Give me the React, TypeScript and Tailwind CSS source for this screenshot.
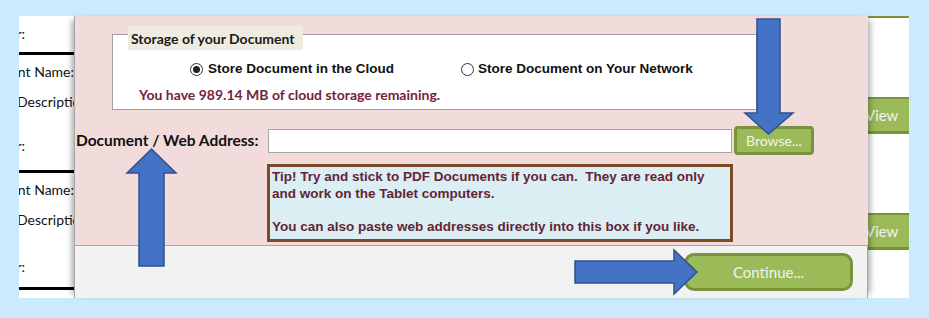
import React from "react";

const calibri = { fontFamily: "Lato, 'Open Sans', sans-serif" };
const arial = { fontFamily: "'Liberation Sans', Arial, sans-serif" };

const Radio = ({ checked }: { checked?: boolean }) => (
  <span className="flex items-center justify-center w-[13px] h-[13px] rounded-full border border-[#333] bg-white shrink-0">
    {checked && <span className="w-[7px] h-[7px] rounded-full bg-[#222]" />}
  </span>
);

const LeftStrip = () => (
  <div className="w-[55px] h-full bg-white overflow-hidden text-[14px] text-[#111] flex flex-col" style={calibri}>
    <div className="h-[36px] flex items-center pb-[2px]">
      <div className="w-[6px] flex justify-end whitespace-nowrap">Owner:</div>
    </div>
    <div className="h-[3px] bg-black" />
    <div className="h-[32px] flex items-center">
      <div className="w-[55px] flex justify-end whitespace-nowrap">Document Name:</div>
    </div>
    <div className="h-[28px] flex items-center whitespace-nowrap">
      <span className="ml-[-2px]">Description:</span>
    </div>
    <div className="h-[55px] flex items-end pb-[14px]">
      <div className="w-[6px] flex justify-end whitespace-nowrap">Owner:</div>
    </div>
    <div className="h-[3px] bg-black" />
    <div className="h-[32px] flex items-center">
      <div className="w-[55px] flex justify-end whitespace-nowrap">Document Name:</div>
    </div>
    <div className="h-[28px] flex items-center whitespace-nowrap">
      <span className="ml-[-2px]">Description:</span>
    </div>
    <div className="h-[54px] flex items-end pb-[10px]">
      <div className="w-[6px] flex justify-end whitespace-nowrap">Owner:</div>
    </div>
    <div className="h-[3px] bg-black" />
  </div>
);

const ViewButton = () => (
  <div className="h-[37px] bg-[#9bbb59] border-t-2 border-b-[3px] border-[#77933c] flex items-center text-[15px] text-[#f2f2f2] whitespace-nowrap" style={calibri}>
    <span className="ml-[-3px]">View</span>
  </div>
);

const RightStrip = () => (
  <div className="w-[41px] h-full bg-white flex flex-col">
    <div className="h-[2px] bg-[#77933c]" />
    <div className="h-[79px]" />
    <ViewButton />
    <div className="h-[79px]" />
    <ViewButton />
  </div>
);

const Dialog = () => (
  <div className="relative z-10 w-[794px] h-full border-l border-[#a6a6a6] flex flex-col shadow-[6px_0_6px_-4px_rgba(0,0,0,0.35),-6px_0_6px_-4px_rgba(0,0,0,0.35)]">
    <div className="h-[230px] bg-[#f2dcdb] border-b border-[#a6a6a6] pt-[18px]">
      {/* storage frame */}
      <div className="relative ml-[37px] w-[645px] h-[76px] bg-white border border-[#a0a0a0]">
        <div
          className="absolute left-[15px] top-[-9px] w-[175px] h-[24px] bg-[#eeece1] flex items-center pl-[3px] text-[14px] font-bold text-[#1a1a1a]"
          style={calibri}
        >
          Storage of your Document
        </div>
        <div className="flex items-center pt-[25px] pl-[77px] h-[43px] text-[13.5px] font-bold text-[#111]" style={arial}>
          <div className="w-[271px] flex items-center gap-[5px]">
            <Radio checked />
            <span>Store Document in the Cloud</span>
          </div>
          <div className="flex items-center gap-[4px]">
            <Radio />
            <span>Store Document on Your Network</span>
          </div>
        </div>
        <div className="pl-[26px] mt-[7px] h-[18px] flex items-center text-[14px] font-bold text-[#76233a]" style={calibri}>
          You have 989.14 MB of cloud storage remaining.
        </div>
      </div>

      {/* address row */}
      <div className="flex items-center mt-[16px] h-[29px]">
        <div className="w-[193px] pl-[1px] text-[15.5px] font-bold text-[#111] whitespace-nowrap" style={calibri}>
          Document / Web Address:
        </div>
        <div className="w-[464px] h-[24px] bg-white border border-[#a6a6a6]" />
        <div
          className="ml-[2px] w-[80px] h-[29px] rounded-[4px] bg-[#9bbb59] border-[3px] border-[#77933c] flex items-center justify-center text-[14px] text-[#f2f2f2]"
          style={calibri}
        >
          Browse...
        </div>
      </div>

      {/* tip */}
      <div
        className="ml-[192px] mt-[9px] w-[466px] h-[78px] bg-[#daeef3] border-[3px] border-[#7d4a26] pl-[2px] pt-[2px] text-[13.5px] leading-[16.5px] font-bold text-[#632535] whitespace-pre"
        style={arial}
      >
        {"Tip! Try and stick to PDF Documents if you can.  They are read only\nand work on the Tablet computers.\n\nYou can also paste web addresses directly into this box if you like."}
      </div>
    </div>
    <div className="flex-1 bg-[#f2f2f2] border-r border-[#a6a6a6] pt-[7px]">
      <div
        className="ml-[609px] w-[169px] h-[38px] rounded-[10px] bg-[#9bbb59] border-[3px] border-[#77933c] flex items-center justify-center text-[15px] text-[#f2f2f2]"
        style={calibri}
      >
        Continue...
      </div>
    </div>
  </div>
);

const Arrows = () => (
  <svg className="absolute left-0 top-0 z-20 pointer-events-none" width="929" height="318" viewBox="0 0 929 318">
    <g fill="#4472c4" stroke="#2f528f" strokeWidth="1.5" strokeLinejoin="miter">
      <polygon points="757,19 780,19 780,113 793,113 768.5,134 745,113 757,113" />
      <polygon points="151.5,149 176,173 164,173 164,266 139,266 139,173 127,173" />
      <polygon points="575,261 674,261 674,250 697,272 674,294 674,283 575,283" />
    </g>
  </svg>
);

export default function App() {
  return (
    <div className="relative w-[929px] h-[318px] bg-[#cceafd] pt-4 pl-[19px] overflow-hidden">
      <div className="flex h-[282px] w-[890px]">
        <LeftStrip />
        <Dialog />
        <RightStrip />
      </div>
      <Arrows />
    </div>
  );
}
